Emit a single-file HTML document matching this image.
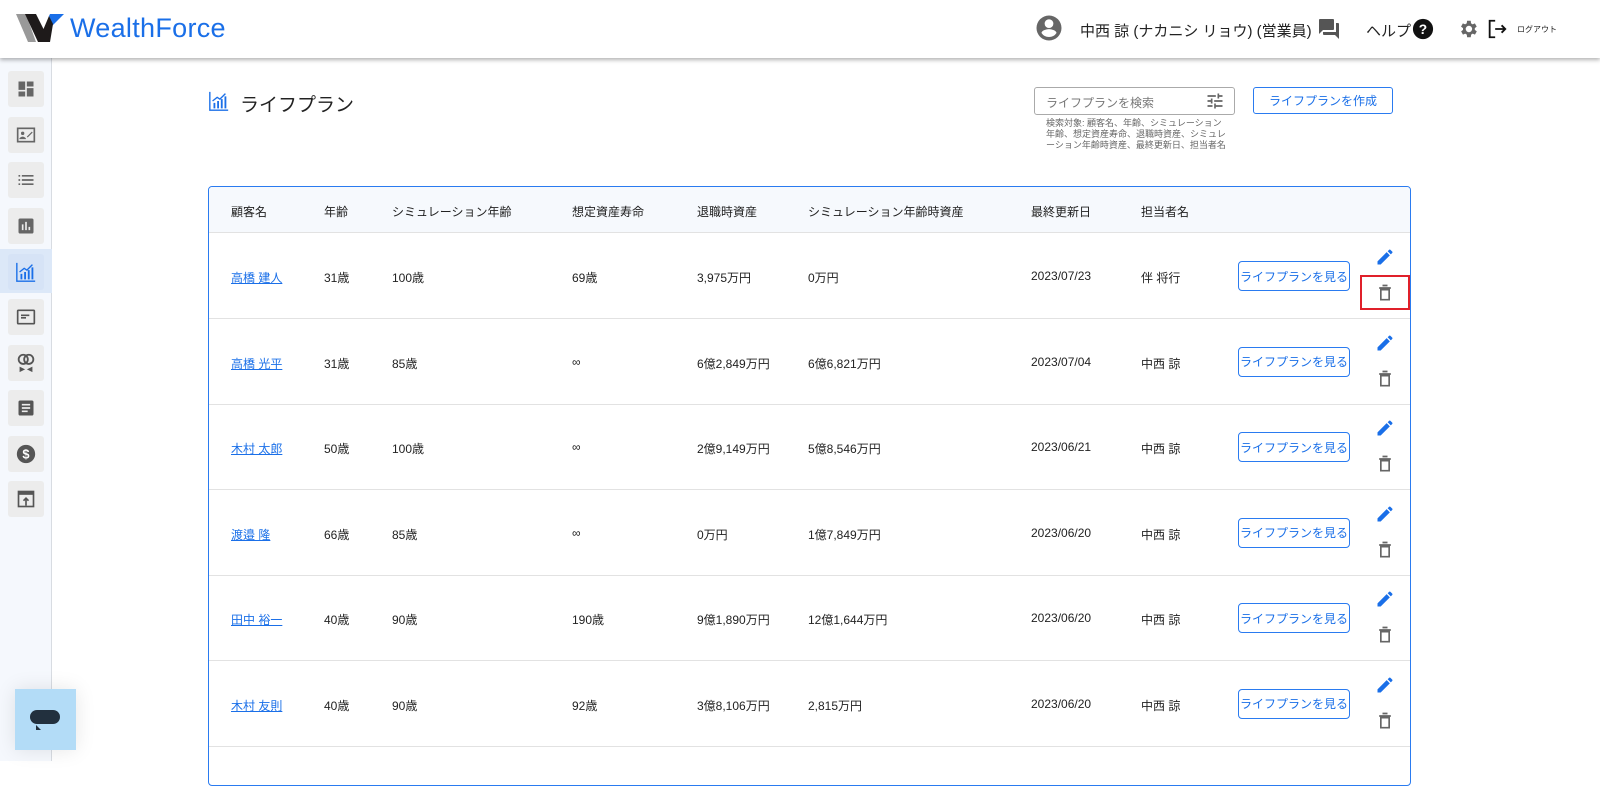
<!DOCTYPE html>
<html><head><meta charset="utf-8"><style>
*{box-sizing:border-box;margin:0;padding:0}
body{width:1600px;height:761px;overflow:hidden;background:#fff;font-family:"Liberation Sans","Noto Sans CJK JP",sans-serif;color:#222;position:relative}
.hdr{position:absolute;left:0;top:0;width:1600px;height:58px;background:#fff;box-shadow:0 2px 4px rgba(0,0,0,.3);z-index:5}
.side{position:absolute;left:0;top:58px;width:52px;height:703px;background:#f5f8fd;border-right:1px solid #d8dce2}
.sb{position:absolute;left:8px;width:36px;height:36px;background:#ececec;border-radius:3px;display:flex;align-items:center;justify-content:center}
.act{position:absolute;left:0;top:191px;width:52px;height:44px;background:#dce8f8}
.t{position:absolute;font-size:12px;white-space:nowrap}
.tbl{position:absolute;left:208px;top:186px;width:1203px;height:600px;border:1px solid #2a7bf0;border-radius:4px;overflow:hidden}
.th{position:absolute;left:0;top:0;width:100%;height:46px;background:#f6f9fd;border-bottom:1px solid #e2e2e2}
.row{position:absolute;left:0;width:100%;height:86px;border-bottom:1px solid #e2e2e2}
.lk{color:#1a6fe8;text-decoration:underline}
.btn{position:absolute;left:1029px;top:28px;width:112px;height:30px;border:1px solid #2a7bf0;border-radius:4px;color:#1a6fe8;font-size:12px;display:flex;align-items:center;justify-content:center}
</style></head><body>
<div class="hdr">
<svg style="position:absolute;left:16px;top:14px" width="50" height="30" viewBox="0 0 50 30"><polygon points="0,0 10,0 20,28 12,28" fill="#999"/><polygon points="9,0 20,0 34,28 22,28" fill="#1e1a1a"/><polygon points="34,0 48,0 36,12 33,2" fill="#1a6fe8"/><polygon points="22,28 33,2 37,10 34,28" fill="#1e1a1a"/></svg>
<div style="position:absolute;left:70px;top:13px;font-size:27px;color:#1a6fe8;letter-spacing:.3px">WealthForce</div>
<svg style="position:absolute;left:1034px;top:13px" width="30" height="30" viewBox="0 0 24 24"><path fill="#666" d="M12 2a10 10 0 100 20 10 10 0 000-20zm0 3a3.5 3.5 0 110 7 3.5 3.5 0 010-7zm0 14.2a7.2 7.2 0 01-6-3.2c0-2 4-3.1 6-3.1s6 1.1 6 3.1a7.2 7.2 0 01-6 3.2z"/></svg>
<div class="t" style="left:1080px;top:20px;font-size:15px">中西 諒 (ナカニシ リョウ) (営業員)</div>
<svg style="position:absolute;left:1317px;top:17px" width="24" height="24" viewBox="0 0 24 24"><path fill="#555" d="M21 6h-2v9H6v2c0 .6.4 1 1 1h11l4 4V7c0-.6-.4-1-1-1zm-4 6V3c0-.6-.4-1-1-1H3c-.6 0-1 .4-1 1v14l4-4h10c.6 0 1-.4 1-1z"/></svg>
<div class="t" style="left:1366px;top:20px;font-size:15px">ヘルプ</div>
<svg style="position:absolute;left:1412px;top:18px" width="22" height="22" viewBox="0 0 24 24"><circle cx="12" cy="12" r="11" fill="#111"/><text x="12" y="17.5" font-size="15" font-weight="bold" fill="#fff" text-anchor="middle" font-family="Liberation Sans">?</text></svg>
<svg style="position:absolute;left:1457px;top:18px" width="22" height="22" viewBox="0 0 24 24"><path fill="#666" d="M19.4 13a7.8 7.8 0 000-2l2.1-1.6-2-3.5-2.5 1a7.3 7.3 0 00-1.7-1L15 3h-4l-.4 2.9a7.3 7.3 0 00-1.7 1l-2.5-1-2 3.5L6.6 11a7.8 7.8 0 000 2l-2.1 1.6 2 3.5 2.5-1c.5.4 1.1.7 1.7 1L11 21h4l.4-2.9c.6-.3 1.2-.6 1.7-1l2.5 1 2-3.5zM13 15.5a3.5 3.5 0 110-7 3.5 3.5 0 010 7z"/></svg>
<svg style="position:absolute;left:1486px;top:18px" width="22" height="22" viewBox="0 0 24 24"><path fill="none" stroke="#111" stroke-width="2" d="M10 3H4v18h6M10 12h11M17 8l4 4-4 4"/></svg>
<div class="t" style="left:1517px;top:24px;font-size:8px">ログアウト</div>
</div>
<div class="side">
<div class="act"></div>
</div>
<div class="sb" style="top:71px"><svg width="20" height="20" viewBox="0 0 24 24"><path fill="#666" d="M3 13h8V3H3zm0 8h8v-6H3zm10 0h8V11h-8zm0-18v6h8V3z"/></svg></div>
<div class="sb" style="top:117px"><svg width="22" height="20" viewBox="0 0 24 24"><rect x="2" y="4" width="20" height="16" fill="none" stroke="#666" stroke-width="2"/><circle cx="8" cy="10" r="2" fill="#666"/><path fill="#666" d="M4 17c0-2 3-3 4-3s4 1 4 3zM13 14l6-6 1 1-6 6z"/></svg></div>
<div class="sb" style="top:162px"><svg width="20" height="20" viewBox="0 0 24 24"><path fill="#666" d="M3 6h2v2H3zm4 0h14v2H7zm-4 5h2v2H3zm4 0h14v2H7zm-4 5h2v2H3zm4 0h14v2H7z"/></svg></div>
<div class="sb" style="top:208px"><svg width="20" height="20" viewBox="0 0 24 24"><path fill="#666" d="M19 3H5a2 2 0 00-2 2v14a2 2 0 002 2h14a2 2 0 002-2V5a2 2 0 00-2-2zM9 17H7v-7h2zm4 0h-2V7h2zm4 0h-2v-4h2z"/></svg></div>
<div class="sb" style="top:254px;background:#d6e3f6"><svg width="22" height="22" viewBox="0 0 24 24"><path fill="none" stroke="#1a6fe8" stroke-width="1.5" d="M2 2v20h20"/><path fill="#1a6fe8" d="M6 14h2v6H6zm4-2h2v8h-2zm4-2h2v10h-2zm4-3h2v13h-2z"/><path stroke="#1a6fe8" stroke-width="1.5" fill="none" d="M5 12l5-4 3 2 6-6"/></svg></div>
<div class="sb" style="top:299px"><svg width="22" height="20" viewBox="0 0 24 24"><rect x="2" y="4" width="20" height="16" rx="1" fill="none" stroke="#555" stroke-width="2"/><path fill="#555" d="M6 9h10v2H6zm0 3h6v2H6z"/></svg></div>
<div class="sb" style="top:345px"><svg width="22" height="22" viewBox="0 0 24 24"><circle cx="9" cy="8" r="5" fill="none" stroke="#555" stroke-width="2"/><circle cx="15" cy="8" r="5" fill="none" stroke="#555" stroke-width="2"/><path fill="#555" d="M5 16l6 3-6 3zm14 0l-6 3 6 3z"/></svg></div>
<div class="sb" style="top:390px"><svg width="20" height="20" viewBox="0 0 24 24"><path fill="#555" d="M19 3H5a2 2 0 00-2 2v14a2 2 0 002 2h14a2 2 0 002-2V5a2 2 0 00-2-2zm-5 14H7v-2h7zm3-4H7v-2h10zm0-4H7V7h10z"/></svg></div>
<div class="sb" style="top:436px"><svg width="22" height="22" viewBox="0 0 24 24"><circle cx="12" cy="12" r="10" fill="#555"/><text x="12" y="17" font-size="14" font-weight="bold" fill="#fff" text-anchor="middle" font-family="Liberation Sans">$</text></svg></div>
<div class="sb" style="top:481px"><svg width="20" height="20" viewBox="0 0 24 24"><rect x="3" y="3" width="18" height="18" fill="none" stroke="#555" stroke-width="2"/><path fill="#555" d="M3 3h18v4H3z"/><path stroke="#555" stroke-width="2" fill="none" d="M12 20v-9M9 14l3-3 3 3"/></svg></div>
<div style="position:absolute;left:15px;top:689px;width:61px;height:61px;background:#b3dcf7;box-shadow:0 0 20px rgba(0,0,0,.1)"><div style="position:absolute;left:15px;top:21px;width:30px;height:14px;background:#22303e;border-radius:7px"></div><div style="position:absolute;left:21px;top:36px;width:0;height:0;border-left:5px solid transparent;border-top:5px solid #22303e;transform:rotate(180deg)"></div></div>

<svg style="position:absolute;left:208px;top:90px" width="22" height="22" viewBox="0 0 24 24"><path fill="none" stroke="#1a6fe8" stroke-width="1.5" d="M2 2v20h20"/><path fill="#1a6fe8" d="M6 14h2v6H6zm4-2h2v8h-2zm4-2h2v10h-2zm4-3h2v13h-2z"/><path stroke="#1a6fe8" stroke-width="1.5" fill="none" d="M5 12l5-4 3 2 6-6"/></svg>
<div class="t" style="left:240px;top:90px;font-size:19px">ライフプラン</div>
<div style="position:absolute;left:1034px;top:87px;width:201px;height:28px;border:1px solid #aaa;border-radius:3px"></div>
<div class="t" style="left:1046px;top:94px;color:#777">ライフプランを検索</div>
<svg style="position:absolute;left:1205px;top:91px" width="20" height="20" viewBox="0 0 24 24"><path fill="#666" d="M3 17v2h6v-2zM3 5v2h10V5zm10 16v-2h8v-2h-8v-2h-2v6zM7 9v2H3v2h4v2h2V9zm14 4v-2H11v2zm-6-4h2V7h4V5h-4V3h-2z"/></svg>
<div style="position:absolute;left:1253px;top:87px;width:140px;height:27px;border:1px solid #2a7bf0;border-radius:3px;color:#1a6fe8;font-size:12px;display:flex;align-items:center;justify-content:center">ライフプランを作成</div>
<div style="position:absolute;left:1046px;top:118px;width:180px;font-size:9px;line-height:11px;color:#666">検索対象: 顧客名、年齢、シミュレーション年齢、想定資産寿命、退職時資産、シミュレーション年齢時資産、最終更新日、担当者名</div>

<div class="tbl">
<div class="th">
<div class="t" style="left:22px;top:16px">顧客名</div><div class="t" style="left:115px;top:16px">年齢</div><div class="t" style="left:183px;top:16px">シミュレーション年齢</div><div class="t" style="left:363px;top:16px">想定資産寿命</div><div class="t" style="left:488px;top:16px">退職時資産</div><div class="t" style="left:599px;top:16px">シミュレーション年齢時資産</div><div class="t" style="left:822px;top:16px">最終更新日</div><div class="t" style="left:932px;top:16px">担当者名</div>
</div>
<div id="rows"></div>
</div>
<div style="position:absolute;left:1360px;top:275px;width:50px;height:35px;border:2px solid #e0202a"></div>
<script>
var d=[["高橋 建人","31歳","100歳","69歳","3,975万円","0万円","2023/07/23","伴 将行"],["高橋 光平","31歳","85歳","∞","6億2,849万円","6億6,821万円","2023/07/04","中西 諒"],["木村 太郎","50歳","100歳","∞","2億9,149万円","5億8,546万円","2023/06/21","中西 諒"],["渡邉 隆","66歳","85歳","∞","0万円","1億7,849万円","2023/06/20","中西 諒"],["田中 裕一","40歳","90歳","190歳","9億1,890万円","12億1,644万円","2023/06/20","中西 諒"],["木村 友則","40歳","90歳","92歳","3億8,106万円","2,815万円","2023/06/20","中西 諒"]];
var xs=[22,115,183,363,488,599,822,932],h="";
d.forEach(function(r,i){h+='<div class="row" style="top:'+(46+i*85.5)+'px">';r.forEach(function(c,j){h+='<div class="t'+(j==0?' lk':'')+'" style="left:'+xs[j]+'px;top:36px">'+c+'</div>'});
h+='<div class="btn">ライフプランを見る</div><svg style="position:absolute;left:1166px;top:14px" width="20" height="20" viewBox="0 0 24 24"><path fill="#1a6fe8" d="M3 17.2V21h3.8l11-11-3.8-3.8zM20.7 7a1 1 0 000-1.4l-2.3-2.3a1 1 0 00-1.4 0l-1.8 1.8 3.8 3.8z"/></svg><svg style="position:absolute;left:1166px;top:50px" width="20" height="20" viewBox="0 0 24 24"><path fill="none" stroke="#666" stroke-width="2" d="M7 8h10v12H7zM5 6h14M9 3h6"/></svg></div>'});
document.getElementById("rows").innerHTML=h;
</script>
</body></html>
